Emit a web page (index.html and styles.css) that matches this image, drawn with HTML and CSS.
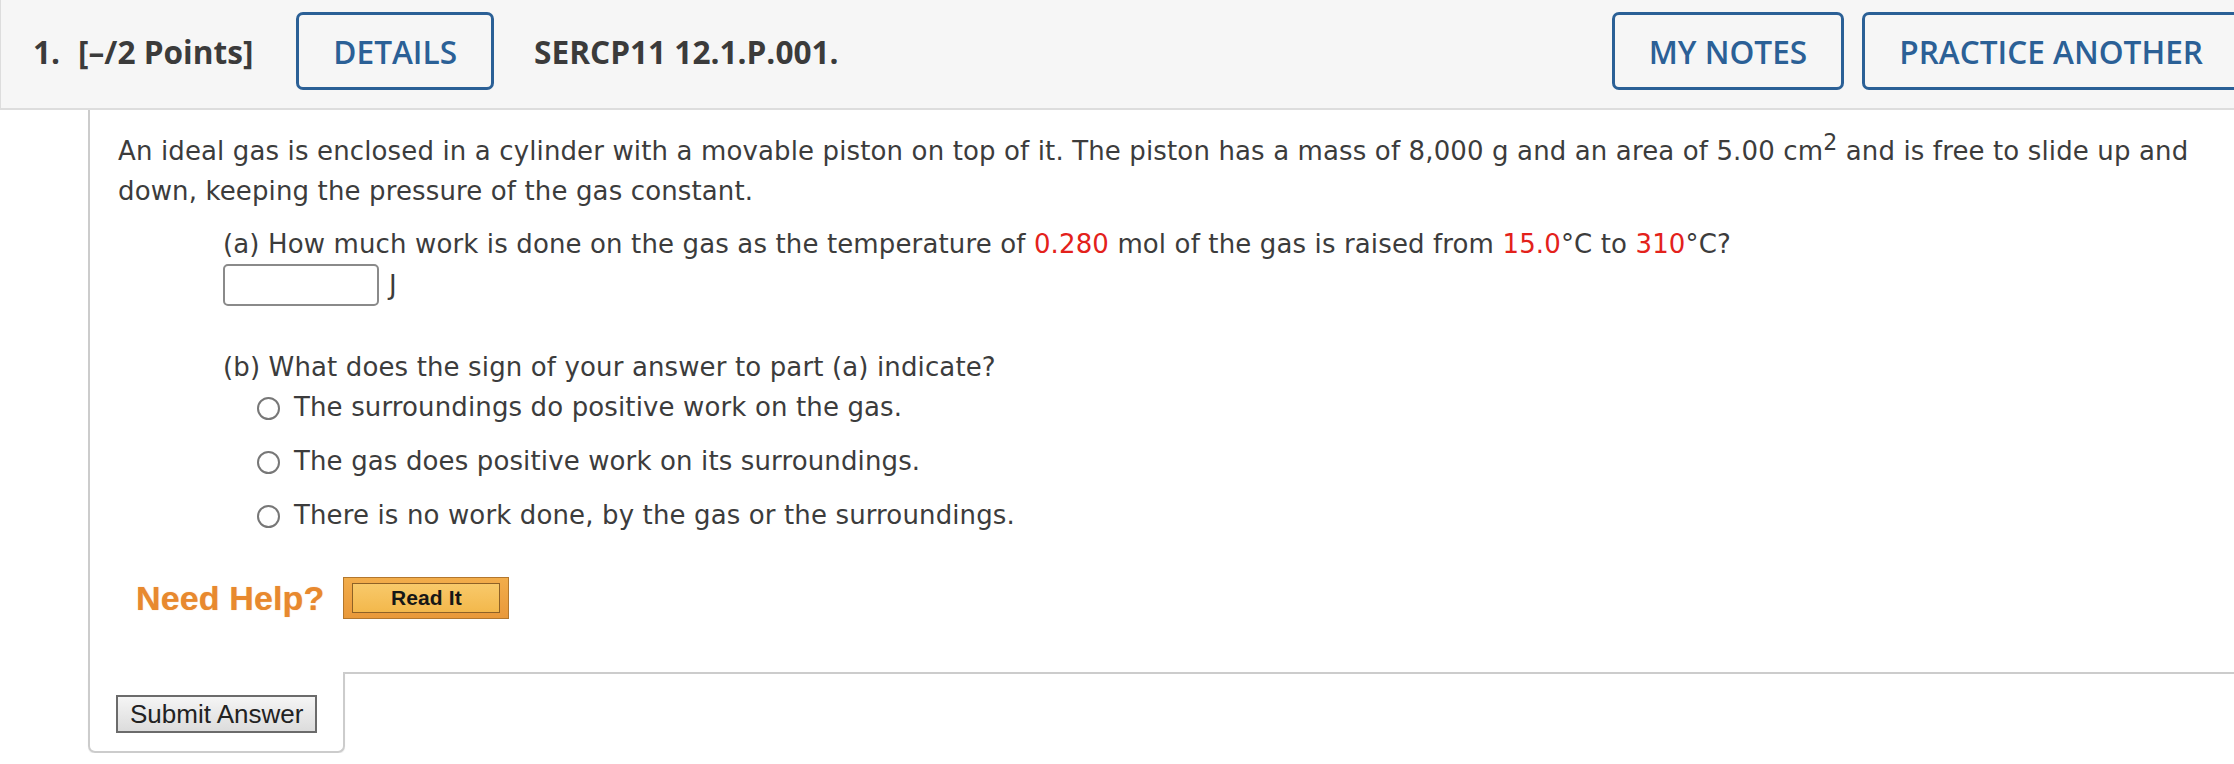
FILE: index.html
```html
<!DOCTYPE html>
<html>
<head>
<meta charset="utf-8">
<title>SERCP11 12.1.P.001</title>
<link rel="stylesheet" href="styles.css">
</head>
<body>
<div class="question">
  <div class="qhead">
    <span class="qnum">1.</span>
    <span class="qpts">[–/2 Points]</span>
    <span class="hbtn details">DETAILS</span>
    <span class="qcode">SERCP11 12.1.P.001.</span>
    <span class="hbtn notes">MY NOTES</span>
    <span class="hbtn practice">PRACTICE ANOTHER</span>
  </div>
  <div class="qbody">
    <p class="stem">An ideal gas is enclosed in a cylinder with a movable piston on top of it. The piston has a mass of 8,000 g and an area of 5.00 cm<sup>2</sup> and is free to slide up and<br>down, keeping the pressure of the gas constant.</p>
    <div class="part">
      <p class="ptext">(a) How much work is done on the gas as the temperature of <span class="red">0.280</span> mol of the gas is raised from <span class="red">15.0</span>°C to <span class="red">310</span>°C?</p>
      <div class="answer"><span class="inbox"></span><span class="unit">J</span></div>
    </div>
    <div class="part partb">
      <p class="ptext">(b) What does the sign of your answer to part (a) indicate?</p>
      <ul class="choices">
        <li><span class="radio"></span>The surroundings do positive work on the gas.</li>
        <li><span class="radio"></span>The gas does positive work on its surroundings.</li>
        <li><span class="radio"></span>There is no work done, by the gas or the surroundings.</li>
      </ul>
    </div>
    <div class="help">
      <span class="needhelp">Need Help?</span>
      <span class="readit"><span class="readit-inner">Read It</span></span>
    </div>
  </div>
  <div class="qfoot">
    <div class="submitcell"><span class="submit">Submit Answer</span></div>
    <div class="footrest"></div>
  </div>
</div>
</body>
</html>
```
FILE: styles.css
```css
body {
  margin: 0;
  background: #ffffff;
  overflow: hidden;
}

.question {
  width: 2240px;
}

.qhead {
  display: flex;
  align-items: center;
  height: 110px;
  box-sizing: border-box;
  padding: 0 0 6px 32px;
  background: #f6f6f6;
  border-left: 1px solid #dddddd;
  border-bottom: 2px solid #dddddd;
  font-family: "Open Sans", "Liberation Sans", sans-serif;
  font-weight: 700;
  font-size: 31.6px;
  color: #3b3b3b;
}

.qpts {
  margin-left: 18px;
}

.hbtn {
  display: inline-flex;
  align-items: center;
  height: 78px;
  box-sizing: border-box;
  padding: 0 34px;
  border: 3px solid #2b6096;
  border-radius: 7px;
  color: #2b6096;
  font-weight: 600;
}

.details {
  margin-left: 43px;
}

.qcode {
  margin-left: 40px;
}

.notes {
  margin-left: auto;
}

.practice {
  margin-left: 18px;
}

.qbody {
  margin-left: 88px;
  border-left: 2px solid #cccccc;
  padding: 21px 40px 53px 28px;
  font-family: "DejaVu Sans", Verdana, sans-serif;
  font-size: 26px;
  letter-spacing: 0.13px;
  line-height: 40px;
  color: #3c3c3c;
}

.stem {
  margin: 0;
}

sup {
  font-size: 0.85em;
  line-height: 0;
  vertical-align: 0.45em;
}

.red {
  color: #e3211b;
}

.part {
  margin-left: 105px;
}

.ptext {
  margin: 13px 0 0;
}

.answer {
  display: flex;
  align-items: center;
  height: 42px;
}

.inbox {
  width: 156px;
  height: 42px;
  box-sizing: border-box;
  border: 2px solid #8a8a8a;
  border-radius: 5px;
  background: #ffffff;
}

.unit {
  margin-left: 10px;
}

.partb .ptext {
  margin-top: 41px;
}

.choices {
  list-style: none;
  margin: 0;
  padding: 0 0 0 34px;
}

.choices li {
  display: flex;
  align-items: center;
}

.choices li + li {
  margin-top: 14px;
}

.radio {
  width: 23px;
  height: 23px;
  box-sizing: border-box;
  border: 2px solid #777777;
  border-radius: 50%;
  margin-right: 14px;
  margin-top: 2px;
  background: #ffffff;
}

.help {
  display: flex;
  align-items: center;
  margin: 42px 0 0 18px;
}

.needhelp {
  font-family: "Liberation Sans", Arial, sans-serif;
  font-weight: 700;
  font-size: 34px;
  color: #e8892e;
  text-shadow: 0 0 1px rgba(232, 137, 46, 0.6);
  margin-right: 19px;
}

.readit {
  display: flex;
  width: 166px;
  height: 42px;
  box-sizing: border-box;
  padding: 5px 8px;
  background: linear-gradient(#f2ad4b, #e9993a);
  border: 1px solid #b3772d;
}

.readit-inner {
  flex: 1;
  display: flex;
  align-items: center;
  justify-content: center;
  border: 1px solid #8e6126;
  background: linear-gradient(#f8c96a, #f3b84c);
  font-family: "Liberation Sans", Arial, sans-serif;
  font-weight: 700;
  font-size: 21px;
  color: #161616;
}

.qfoot {
  display: flex;
  align-items: flex-start;
}

.submitcell {
  width: 257px;
  box-sizing: border-box;
  margin-left: 88px;
  padding: 23px 0 18px 26px;
  border-left: 2px solid #cccccc;
  border-right: 2px solid #cccccc;
  border-bottom: 2px solid #cccccc;
  border-radius: 0 0 7px 7px;
  box-shadow: 0 1px 1px rgba(0, 0, 0, 0.08);
}

.submit {
  display: inline-block;
  height: 38px;
  box-sizing: border-box;
  padding: 0 12px;
  border: 2px solid #6b6b6b;
  background: linear-gradient(#f5f5f5, #dcdcdc);
  font-family: "Liberation Sans", Arial, sans-serif;
  font-size: 26px;
  line-height: 34px;
  color: #222222;
}

.footrest {
  flex: 1;
  border-top: 2px solid #cccccc;
}
```
